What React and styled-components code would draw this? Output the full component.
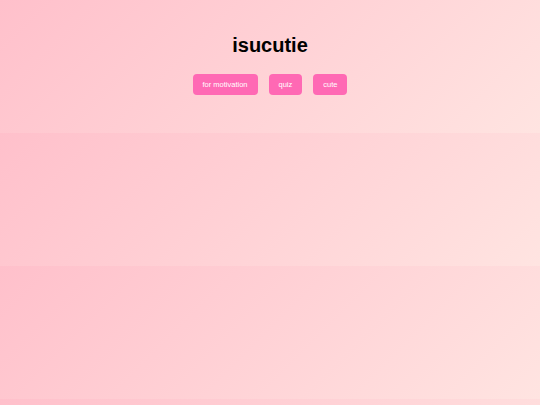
import React from "react";
import styled, { createGlobalStyle } from "styled-components";

const Global = createGlobalStyle`
  html {
    margin: 0;
    min-height: 100%;
    background: linear-gradient(135deg, #ffc0cb, #ffe4e1);
    background-size: 100% 133px;
    background-repeat: repeat;
  }
  body {
    margin: 0;
    font-family: "Liberation Sans", Arial, sans-serif;
  }
`;

const Page = styled.main`
  display: flex;
  flex-direction: column;
  align-items: center;
  padding-top: 34px;
`;

const Title = styled.h1`
  margin: 0;
  font-size: 20px;
  line-height: 23px;
  font-weight: bold;
  color: #000;
`;

const Nav = styled.nav`
  display: flex;
  gap: 11px;
  margin-top: 17px;
`;

const Button = styled.button`
  font-family: "Liberation Sans", Arial, sans-serif;
  font-size: 7.5px;
  line-height: 9px;
  padding: 6px 10px;
  border: none;
  border-radius: 4px;
  background: #ff69b4;
  color: #fff;
  cursor: pointer;
`;

export default function App() {
  return (
    <>
      <Global />
      <Page>
        <Title>isucutie</Title>
        <Nav>
          <Button>for motivation</Button>
          <Button>quiz</Button>
          <Button>cute</Button>
        </Nav>
      </Page>
    </>
  );
}
